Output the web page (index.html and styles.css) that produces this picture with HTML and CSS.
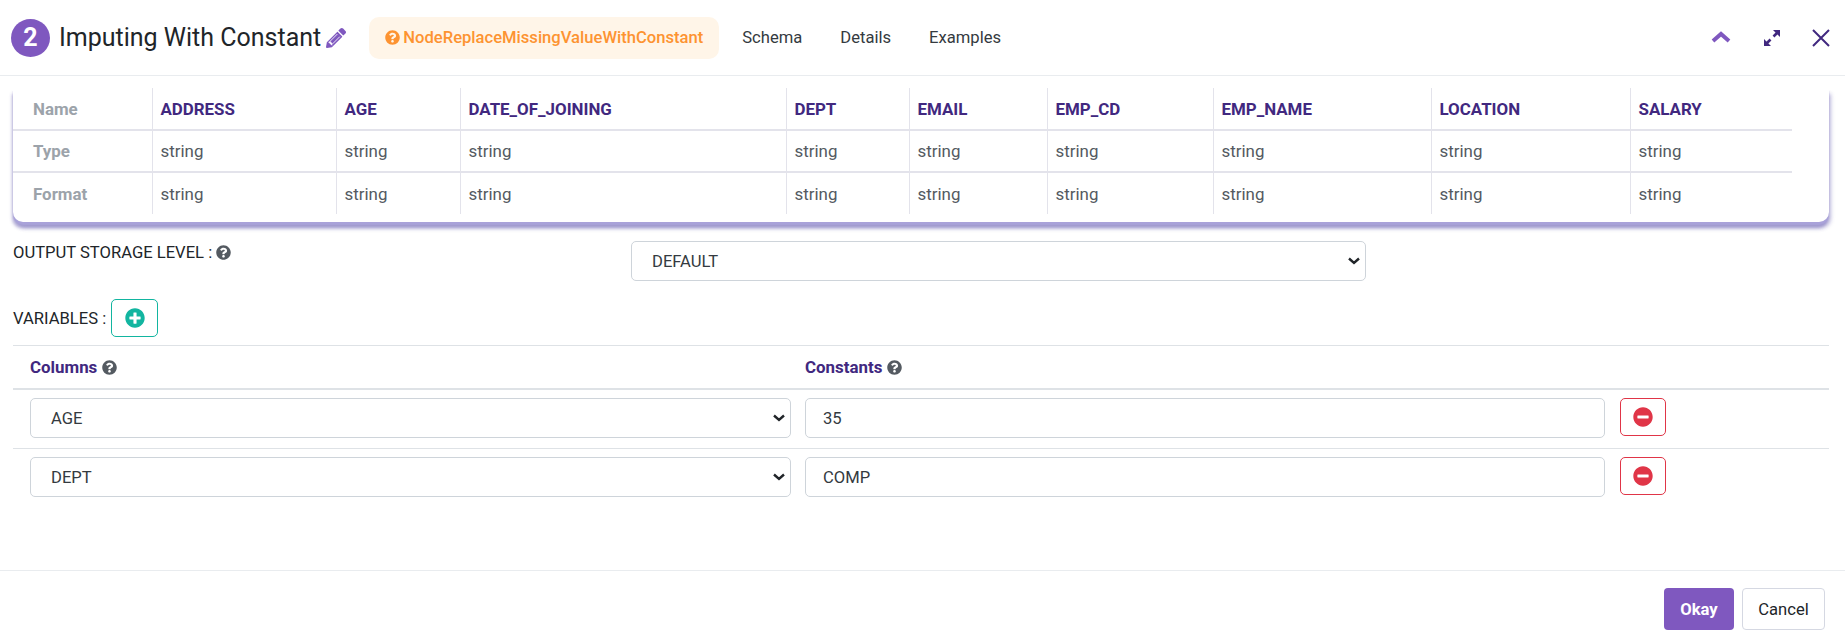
FILE: index.html
```html
<!DOCTYPE html>
<html>
<head>
<meta charset="utf-8"/>
<title>Imputing With Constant</title>
<link rel="stylesheet" href="styles.css">
</head>
<body>
<svg class="defs" xmlns="http://www.w3.org/2000/svg">
	<symbol id="i-help" viewBox="0 0 512 512"><path d="M504 256c0 136.997-111.043 248-248 248S8 392.997 8 256C8 119.083 119.043 8 256 8s248 111.083 248 248zM262.655 90c-54.497 0-89.255 22.957-116.549 63.758-3.536 5.286-2.353 12.415 2.715 16.258l34.699 26.31c5.205 3.947 12.621 3.008 16.665-2.122 17.864-22.658 30.113-35.797 57.303-35.797 20.429 0 45.698 13.148 45.698 32.958 0 14.976-12.363 22.667-32.534 33.976C247.128 238.528 216 254.941 216 296v4c0 6.627 5.373 12 12 12h56c6.627 0 12-5.373 12-12v-1.333c0-28.462 83.186-29.647 83.186-106.667 0-58.002-60.165-102-116.531-102zM256 338c-25.365 0-46 20.635-46 46 0 25.364 20.635 46 46 46s46-20.636 46-46c0-25.365-20.635-46-46-46z"/></symbol>
	<symbol id="i-plus" viewBox="0 0 512 512"><path d="M256 8C119 8 8 119 8 256s111 248 248 248 248-111 248-248S393 8 256 8zm144 276c0 6.6-5.4 12-12 12h-92v92c0 6.6-5.4 12-12 12h-56c-6.6 0-12-5.4-12-12v-92h-92c-6.6 0-12-5.4-12-12v-56c0-6.6 5.4-12 12-12h92v-92c0-6.6 5.4-12 12-12h56c6.6 0 12 5.4 12 12v92h92c6.6 0 12 5.4 12 12v56z"/></symbol>
	<symbol id="i-minus" viewBox="0 0 512 512"><path d="M256 8C119 8 8 119 8 256s111 248 248 248 248-111 248-248S393 8 256 8zM124 296c-6.6 0-12-5.4-12-12v-56c0-6.6 5.4-12 12-12h264c6.6 0 12 5.4 12 12v56c0 6.6-5.4 12-12 12H124z"/></symbol>
</svg>

<header class="head">
	<span class="step">2</span>
	<h1 class="title">Imputing With Constant</h1>
	<svg class="pencil" viewBox="0 0 512 512"><path d="M497.9 142.1l-46.1 46.1c-4.7 4.7-12.3 4.7-17 0l-111-111c-4.7-4.7-4.7-12.3 0-17l46.1-46.1c18.7-18.7 49.1-18.7 67.9 0l60.1 60.1c18.8 18.7 18.8 49.1 0 67.9zM284.2 99.8L21.6 362.4.4 483.9c-2.9 16.4 11.4 30.6 27.8 27.8l121.5-21.3 262.6-262.6c4.7-4.7 4.7-12.3 0-17l-111-111c-4.8-4.7-12.4-4.7-17.1 0z"/><path class="pencil-cut" d="M105 340 L290 155 M170 405 L355 220 M70 360 L150 440 L150 385 L120 385 L120 355 Z"/></svg>
	<span class="nodetype"><svg class="ico"><use href="#i-help"/></svg>NodeReplaceMissingValueWithConstant</span>
	<nav class="tabs">
		<a>Schema</a>
		<a>Details</a>
		<a>Examples</a>
	</nav>
	<div class="actions">
		<svg class="chev" viewBox="0 0 20 12"><path d="M2 10 L10 3 L18 10"/></svg>
		<svg class="expand" viewBox="0 0 18 18"><path d="M10.5 7.5 L15 3 M7.5 10.5 L3 15"/><path class="fill" d="M10 1 H17 V8 Z M1 10 V17 H8 Z"/></svg>
		<svg class="close" viewBox="0 0 18 18"><path d="M1 1 L17 17 M17 1 L1 17"/></svg>
	</div>
</header>

<main class="body">
	<div class="schema">
		<table>
			<colgroup>
				<col class="c0"><col class="c1"><col class="c2"><col class="c3"><col class="c4"><col class="c5"><col class="c6"><col class="c7"><col class="c8"><col class="c9">
			</colgroup>
			<tr class="names"><th>Name</th><td>ADDRESS</td><td>AGE</td><td>DATE_OF_JOINING</td><td>DEPT</td><td>EMAIL</td><td>EMP_CD</td><td>EMP_NAME</td><td>LOCATION</td><td>SALARY</td></tr>
			<tr><th>Type</th><td>string</td><td>string</td><td>string</td><td>string</td><td>string</td><td>string</td><td>string</td><td>string</td><td>string</td></tr>
			<tr><th>Format</th><td>string</td><td>string</td><td>string</td><td>string</td><td>string</td><td>string</td><td>string</td><td>string</td><td>string</td></tr>
		</table>
	</div>

	<div class="storage">
		<label class="storage-label">OUTPUT STORAGE LEVEL : <svg class="ico"><use href="#i-help"/></svg></label>
		<select class="field storage-select"><option>DEFAULT</option></select>
	</div>

	<div class="vars">
		<span>VARIABLES :</span>
		<button class="iconbtn add"><svg><use href="#i-plus"/></svg></button>
	</div>

	<div class="vargrid varhead">
		<div class="colname">Columns <svg class="ico"><use href="#i-help"/></svg></div>
		<div class="colname">Constants <svg class="ico"><use href="#i-help"/></svg></div>
	</div>
	<div class="vargrid varrow">
		<select class="field"><option>AGE</option></select>
		<input class="field" value="35">
		<button class="iconbtn del"><svg><use href="#i-minus"/></svg></button>
	</div>
	<div class="vargrid varrow last">
		<select class="field"><option>DEPT</option></select>
		<input class="field" value="COMP">
		<button class="iconbtn del"><svg><use href="#i-minus"/></svg></button>
	</div>
</main>

<footer class="foot">
	<button class="btn okay">Okay</button>
	<button class="btn cancel">Cancel</button>
</footer>
</body>
</html>
```

FILE: styles.css
```css
* {
	box-sizing: border-box;
}
html, body {
	margin: 0;
	height: 642px;
	overflow: hidden;
}
body {
	font-family: Roboto, sans-serif;
	font-size: 16.6px;
	color: #212529;
	background: #fff;
}
.defs {
	display: none;
}
.ico {
	width: 15px;
	height: 15px;
	fill: currentColor;
	vertical-align: -2px;
}
/* header */
.head {
	display: flex;
	align-items: center;
	height: 76px;
	padding: 0 15px 0 11px;
	border-bottom: 1px solid #e9ecef;
}
.step {
	display: flex;
	align-items: center;
	justify-content: center;
	width: 39px;
	height: 38px;
	border-radius: 50%;
	background: #7f58bf;
	color: #fff;
	font-size: 25px;
	font-weight: 700;
}
.title {
	margin: 0 0 0 9px;
	font-size: 25px;
	font-weight: 400;
	line-height: 1.2;
}
.pencil {
	width: 20px;
	height: 20px;
	margin-left: 5px;
	fill: #7f58bf;
}
.pencil-cut {
	fill: #fff;
	stroke: #fff;
	stroke-width: 22;
}
.nodetype {
	display: flex;
	align-items: center;
	gap: 3px;
	height: 42px;
	margin-left: 23px;
	padding: 0 16px;
	border-radius: 10px;
	background: #fff5e8;
	color: #fd9331;
	font-weight: 500;
}
.tabs {
	display: flex;
	gap: 38px;
	margin-left: 23px;
	color: #343a40;
}
.actions {
	display: flex;
	align-items: center;
	margin-left: auto;
}
.chev {
	width: 20px;
	height: 12px;
	margin-bottom: 2px;
	fill: none;
	stroke: #7f58bf;
	stroke-width: 4;
}
.expand {
	width: 18px;
	height: 18px;
	margin-left: 32px;
	fill: none;
	stroke: #41287f;
	stroke-width: 2.6;
}
.expand .fill {
	fill: #41287f;
	stroke: none;
}
.close {
	width: 18px;
	height: 18px;
	margin-left: 31px;
	fill: none;
	stroke: #41287f;
	stroke-width: 2;
}
/* schema table */
.body {
	height: 494px;
	padding: 12px 16px 0 13px;
}
.schema {
	height: 134px;
	border-radius: 0 0 10px 10px;
	box-shadow: 0 3px 1px #a9a2d9, 0 6px 4px rgba(90, 80, 170, .25), 2px 6px 4px rgba(90, 80, 170, .3), -1px 6px 3px rgba(90, 80, 170, .25);
	background: #fff;
}
.schema table {
	width: 1779px;
	table-layout: fixed;
	border-collapse: collapse;
}
.c0 { width: 139px; }
.c1 { width: 184px; }
.c2 { width: 124px; }
.c3 { width: 326px; }
.c4 { width: 123px; }
.c5 { width: 138px; }
.c6 { width: 166px; }
.c7 { width: 218px; }
.c8 { width: 199px; }
.c9 { width: 162px; }
.schema th, .schema td {
	height: 42px;
	padding: 0 8px;
	text-align: left;
	font-size: 16.9px;
	font-weight: 400;
	color: #545a61;
	border-left: 1px solid #e3e3eb;
	border-top: 2px solid #e3e3eb;
}
.schema th {
	padding-left: 20px;
	border-left: 0;
	font-weight: 700;
	color: #9ca3aa;
}
.schema .names th, .schema .names td {
	border-top: 0;
}
.schema .names td {
	font-weight: 700;
	color: #41287f;
}
/* storage */
.storage {
	display: flex;
	align-items: flex-start;
	margin-top: 19px;
}
.storage-label {
	display: block;
	width: 618px;
	padding-top: 2px;
	line-height: 20px;
}
.storage-label .ico {
	color: #545a61;
}
.field {
	display: block;
	height: 40px;
	padding: 0 17px;
	border: 1px solid #ced4da;
	border-radius: 5px;
	background: #fff;
	color: #343a40;
	font-family: Roboto, sans-serif;
	font-size: 16.6px;
}
select.field {
	appearance: none;
	padding-left: 20px;
	background: #fff url("data:image/svg+xml,%3Csvg xmlns='http://www.w3.org/2000/svg' viewBox='0 0 12 8'%3E%3Cpath d='M1 1.5 L6 6 L11 1.5' fill='none' stroke='%23212529' stroke-width='2.4'/%3E%3C/svg%3E") no-repeat right 5px center / 12px 8px;
}
.storage-select {
	width: 735px;
}
.vars {
	display: flex;
	align-items: center;
	gap: 5px;
	margin-top: 18px;
	padding-bottom: 8px;
	border-bottom: 1px solid #dee2e6;
}
.iconbtn {
	display: flex;
	align-items: center;
	justify-content: center;
	padding: 0;
	background: #fff;
	border-radius: 5px;
	border: 1px solid;
}
.iconbtn svg {
	width: 20px;
	height: 20px;
	fill: currentColor;
}
.add {
	width: 47px;
	height: 38px;
	color: #12b5a0;
}
.del {
	width: 46px;
	height: 38px;
	margin-left: 1px;
	color: #e03547;
}
/* variables */
.vargrid {
	display: grid;
	grid-template-columns: 761px 800px 47px;
	column-gap: 14px;
	align-items: start;
	padding-left: 17px;
}
.varhead {
	height: 44px;
	align-items: center;
	border-bottom: 2px solid #dee2e6;
}
.colname {
	font-size: 16.9px;
	font-weight: 700;
	color: #41287f;
}
.colname .ico {
	color: #545a61;
}
.varrow {
	height: 59px;
	padding-top: 8px;
	border-bottom: 1px solid #dee2e6;
}
.varrow.last {
	border-bottom: 0;
}
/* footer */
.foot {
	display: flex;
	justify-content: flex-end;
	gap: 8px;
	height: 72px;
	padding: 17px 20px 0 0;
	border-top: 1px solid #e9ecef;
}
.btn {
	height: 42px;
	border-radius: 4px;
	font-family: Roboto, sans-serif;
	font-size: 16.6px;
}
.okay {
	width: 70px;
	border: 0;
	background: #7f58bf;
	color: #fff;
	font-weight: 700;
}
.cancel {
	width: 83px;
	border: 1px solid #d5d8e2;
	background: #fff;
	color: #212529;
}
```
